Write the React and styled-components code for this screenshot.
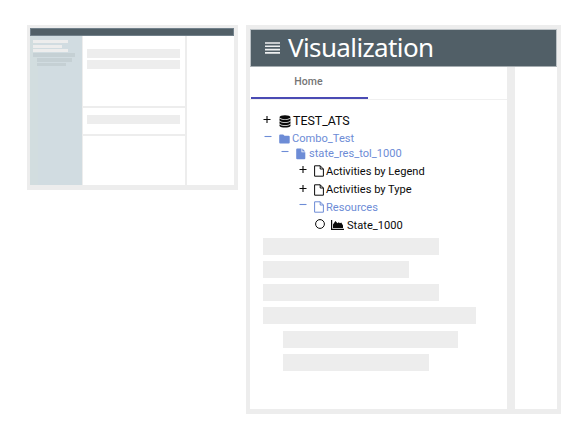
import React from "react";
import styled, { createGlobalStyle } from "styled-components";

const GlobalStyle = createGlobalStyle`
  * { box-sizing: border-box; }
  body { margin: 0; background: #fff; overflow: hidden; }
`;

const line = "#ededed";
const slate = "#515f67";
const blue = "#6d8cd6";

const Page = styled.main`
  width: 588px;
  height: 428px;
  padding: 25px 27px 0 27px;
  display: flex;
  align-items: flex-start;
  gap: 8.5px;
  font-family: Roboto, "Liberation Sans", sans-serif;
`;

const Overview = styled.section`
  width: 210.5px;
  height: 164.5px;
  padding: 3px 3.5px 4.5px 3px;
  background: ${line};
  display: flex;
  flex-direction: column;
`;

const OverviewHeader = styled.div`
  height: 8px;
  flex: none;
  background: ${slate};
  border: 1px solid #71808a;
`;

const OverviewBody = styled.div`
  flex: 1;
  display: grid;
  grid-template-columns: 52px 102px 1fr;
  column-gap: 1px;
`;

const OverviewSide = styled.div`
  background: linear-gradient(90deg, #d2dddf 0 8px, #d1dce1 8px);
  padding: 4px 0 0 3px;
`;

const OverviewCenter = styled.div`
  display: grid;
  grid-template-rows: 70px 26px 1fr;
  row-gap: 2px;
`;

const Pane = styled.div`
  background: #fff;
  padding: ${(p) => p.$pad || 0};
`;

const OverviewRight = styled.div`
  background: #fff;
  margin-left: 1px;
`;

const Block = styled.div`
  width: ${(p) => p.$w}px;
  height: ${(p) => p.$h}px;
  margin: ${(p) => p.$top || 0}px 0 0 ${(p) => p.$left || 0}px;
  background: ${(p) => (p.$dark ? "#c5d0d4" : line)};
`;

const Detail = styled.section`
  width: 314.6px;
  height: 389px;
  padding: 4px 3.5px 5px 4px;
  background: ${line};
  display: flex;
  flex-direction: column;
`;

const Header = styled.header`
  height: 38px;
  flex: none;
  background: ${slate};
  border: 1px solid #bbc1c5;
  border-bottom-color: #a6adb1;
  display: flex;
  align-items: center;
  padding-left: 14px;
  gap: 7px;
`;

const Title = styled.h1`
  margin: -3px 0 0;
  color: #fff;
  font: 400 26px/36px "Noto Sans", "Open Sans", sans-serif;
  letter-spacing: -0.62px;
  white-space: nowrap;
`;

const Columns = styled.div`
  flex: 1;
  display: grid;
  grid-template-columns: 257px 1fr;
  column-gap: 8px;
`;

const MainColumn = styled.div`
  background: #fff;
`;

const Tabs = styled.nav`
  height: 33px;
  border-bottom: 1px solid #f0f0f0;
  padding-left: 1px;
`;

const Tab = styled.div`
  width: 117px;
  height: 32px;
  border-bottom: 2px solid #4a4bb4;
  padding-right: 2px;
  text-align: center;
  color: #757575;
  font-weight: 500;
  font-size: 10.5px;
  letter-spacing: 0.1px;
  line-height: 29px;
`;

const Tree = styled.div`
  padding-top: 12px;
  height: 138px;
`;

const Row = styled.div`
  display: grid;
  grid-template-columns: ${(p) => p.$cols};
  height: ${(p) => p.$h || 18}px;
  margin-bottom: ${(p) => p.$after || 0}px;
  align-items: center;
  padding-left: ${(p) => p.$indent}px;
  color: ${(p) => (p.$active ? blue : "#0a0a0a")};
  font-size: ${(p) => p.$size || 11.1}px;
  white-space: nowrap;
  svg { display: block; }
`;

const RootLabel = styled.span`
  line-height: 14px;
  padding-bottom: 1px;
`;

const Bars = styled.div`
  padding-left: 13px;
`;

const MenuIcon = () => (
  <svg width="16" height="12" viewBox="0 0 16 12" stroke="#eef0f1" strokeWidth="1.6">
    <path d="M0 1h15M0 4.3h15M0 7.6h15M0 10.9h15" />
  </svg>
);

const Toggle = ({ open }) => (
  <svg width="8" height="12" viewBox="0 0 8 12" stroke="currentColor" strokeWidth="1.1">
    <path d={open ? "M0.5 3.5h7" : "M0.5 4.5h7M4 1v7"} />
  </svg>
);

const Database = () => (
  <svg width="12" height="13" viewBox="0 0 12 13" fill="currentColor">
    <ellipse cx="6" cy="2.2" rx="5.5" ry="2" />
    <path d="M.5 3.3c1.5 2 9.5 2 11 0v2.2c-1.5 2.1-9.5 2.1-11 0zM.5 6.3c1.5 2 9.5 2 11 0v2.2c-1.5 2.1-9.5 2.1-11 0zM.5 9.3c1.5 2 9.5 2 11 0v1.6c-1.5 2.2-9.5 2.2-11 0z" />
  </svg>
);

const Folder = () => (
  <svg width="11" height="10" viewBox="0 0 11 10" fill="currentColor">
    <path d="M1.2.5h3l1.3 1.3h4.2q1 0 1 1v5.6q0 1-1 1H1.2q-1 0-1-1V1.5q0-1 1-1z" />
  </svg>
);

const FileSolid = () => (
  <svg width="10" height="12" viewBox="0 0 10 12" fill="currentColor">
    <path d="M1.2.5h4.3v3.7h3.8v6q0 1-1 1H1.2q-1 0-1-1V1.5q0-1 1-1zM6.3.5l3 3h-3z" />
  </svg>
);

const FileOutline = () => (
  <svg width="10" height="12" viewBox="0 0 10 12" fill="none" stroke="currentColor">
    <path d="M.6.8h5.6l3.2 3.2v7.2H.6zM6.2.8v3.2h3.2" />
  </svg>
);

const Circle = () => (
  <svg width="10" height="12" viewBox="0 0 10 12" fill="none" stroke="currentColor">
    <circle cx="5" cy="5" r="4.4" />
  </svg>
);

const AreaChart = () => (
  <svg width="13" height="10" viewBox="0 0 13 10" fill="currentColor">
    <path d="M0 0h1.2v8.7H13V10H0zM2 8V4.4L4.4 1l2.1 2.2 1.2-.9L9 3.2l1.3-.8L12 5.5V8z" />
  </svg>
);

export default function App() {
  return (
    <>
      <GlobalStyle />
      <Page>
        <Overview>
          <OverviewHeader />
          <OverviewBody>
            <OverviewSide>
              <Block $w={35} $h={3.3} />
              <Block $w={29} $h={3} $top={1.7} />
              <Block $w={35} $h={3.3} $top={1.2} />
              <Block $w={42} $h={3.5} $top={0.7} $dark />
              <Block $w={35} $h={4} $top={1.3} $left={4} $dark />
              <Block $w={29} $h={3.5} $top={1} $left={4} $dark />
            </OverviewSide>
            <OverviewCenter>
              <Pane $pad="13px 0 0 4px">
                <Block $w={93} $h={9} />
                <Block $w={93} $h={9} $top={2} />
              </Pane>
              <Pane $pad="7px 0 0 4px">
                <Block $w={93} $h={9} />
              </Pane>
              <Pane />
            </OverviewCenter>
            <OverviewRight />
          </OverviewBody>
        </Overview>
        <Detail>
          <Header>
            <MenuIcon />
            <Title>Visualization</Title>
          </Header>
          <Columns>
            <MainColumn>
              <Tabs>
                <Tab>Home</Tab>
              </Tabs>
              <Tree>
                <Row $indent={13} $cols="16px 14px auto" $size={12.4}>
                  <Toggle />
                  <Database />
                  <RootLabel>TEST_ATS</RootLabel>
                </Row>
                <Row $indent={14} $cols="15px 13px auto" $active $h={17}>
                  <Toggle open />
                  <Folder />
                  <span>Combo_Test</span>
                </Row>
                <Row $indent={31} $cols="15px 13px auto" $active $h={13} $after={1}>
                  <Toggle open />
                  <FileSolid />
                  <span>state_res_tol_1000</span>
                </Row>
                <Row $indent={49} $cols="15px 12px auto" $h={20}>
                  <Toggle />
                  <FileOutline />
                  <span>Activities by Legend</span>
                </Row>
                <Row $indent={49} $cols="15px 12px auto" $h={17}>
                  <Toggle />
                  <FileOutline />
                  <span>Activities by Type</span>
                </Row>
                <Row $indent={49} $cols="15px 12px auto" $active>
                  <Toggle open />
                  <FileOutline />
                  <span>Resources</span>
                </Row>
                <Row $indent={65} $cols="16px 16px auto">
                  <Circle />
                  <AreaChart />
                  <span>State_1000</span>
                </Row>
              </Tree>
              <Bars>
                <Block $w={175.5} $h={17} />
                <Block $w={146} $h={17} $top={6} />
                <Block $w={175.5} $h={17} $top={6} />
                <Block $w={213} $h={17} $top={6} />
                <Block $w={175.5} $h={17} $top={7} $left={19.5} />
                <Block $w={146} $h={17} $top={6} $left={19.5} />
              </Bars>
            </MainColumn>
            <Pane />
          </Columns>
        </Detail>
      </Page>
    </>
  );
}
